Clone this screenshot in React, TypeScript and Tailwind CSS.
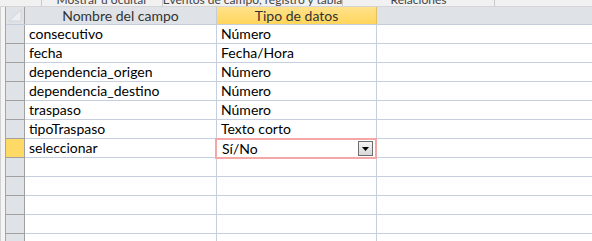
import React from "react";

const rows: [string, string][] = [
  ["consecutivo", "Número"],
  ["fecha", "Fecha/Hora"],
  ["dependencia_origen", "Número"],
  ["dependencia_destino", "Número"],
  ["traspaso", "Número"],
  ["tipoTraspaso", "Texto corto"],
  ["seleccionar", "Sí/No"],
  ["", ""],
  ["", ""],
  ["", ""],
  ["", ""],
  ["", ""],
];

const SELECTED = 6;

export default function App() {
  return (
    <div className="w-[592px] h-[241px] overflow-hidden bg-white flex flex-col font-['Lato','Open_Sans',sans-serif] text-[14px] text-black">
      {/* ribbon group labels, clipped */}
      <div className="h-[7px] shrink-0 overflow-hidden bg-[#f1f1f1] border-b border-[#d5d5d5] flex text-[12px] text-[#444] leading-none whitespace-nowrap">
        <div className="w-[42px] shrink-0 border-r border-[#c8c8c8]" />
        <div className="w-[121px] shrink-0 border-r border-[#c8c8c8] flex justify-center">
          <span className="-mt-[6px]">Mostrar u ocultar</span>
        </div>
        <div className="w-[180px] shrink-0 border-r border-[#c8c8c8] flex justify-center">
          <span className="-mt-[6px]">Eventos de campo, registro y tabla</span>
        </div>
        <div className="w-[152px] shrink-0 border-r border-[#c8c8c8] flex justify-center">
          <span className="-mt-[6px]">Relaciones</span>
        </div>
      </div>

      <div className="flex flex-1 min-h-0">
        {/* left frame */}
        <div className="w-[6px] shrink-0 border-l border-r border-l-[#d0d0d0] border-r-[#a5a5a5] bg-[#f4f4f4]" />

        <div className="flex-1 flex flex-col">
          {/* header */}
          <div className="flex h-[18px] shrink-0 bg-[#dfe3e8] border-b border-[#c5cddb] text-[#333]">
            <div className="w-[19px] shrink-0 border-r border-[#a0a0a0] relative">
              <svg width="13" height="12" viewBox="0 0 13 12" className="absolute left-[3px] top-[3px]">
                <path d="M12 0 L12 11 L0 11 Z" fill="#eceef1" stroke="#c6cad0" strokeWidth="0.6" />
              </svg>
            </div>
            <div className="w-[192px] shrink-0 border-r border-[#c5cddb] flex items-center justify-center leading-none">
              Nombre del campo
            </div>
            <div className="w-[160px] shrink-0 border-r border-[#e0c060] bg-gradient-to-b from-[#ffe28a] to-[#ffd55a] flex items-center justify-center leading-none">
              Tipo de datos
            </div>
            <div className="flex-1" />
          </div>

          {rows.map(([name, type], i) => {
            const sel = i === SELECTED;
            return (
              <div key={i} className="flex h-[19px] shrink-0">
                <div
                  className={
                    "w-[19px] shrink-0 border-r border-b border-[#a0a0a0] " +
                    (sel ? "bg-[#ffd966]" : "bg-[#dfe3e8]")
                  }
                />
                <div className="w-[192px] shrink-0 border-r border-b border-[#c5cfdf] pl-[4px] flex items-center leading-none">
                  {name}
                </div>
                {sel ? (
                  <div className="w-[162px] shrink-0 border-2 border-[#f4a7a7] -ml-[2px] -mr-[2px] pl-[5px] pr-[2px] flex items-center justify-between leading-none relative z-10 bg-white h-[21px] -mt-[1px]">
                    <span>{type}</span>
                    <div className="w-[15px] h-[15px] border border-[#6d6d6d] bg-gradient-to-b from-[#f4f4f4] to-[#d8d8d8] flex items-center justify-center">
                      <svg width="7" height="4" viewBox="0 0 7 4">
                        <path d="M0 0 H7 L3.5 4 Z" fill="#000" />
                      </svg>
                    </div>
                  </div>
                ) : (
                  <div className="w-[160px] shrink-0 border-r border-b border-[#c5cfdf] pl-[4px] flex items-center leading-none">
                    {type}
                  </div>
                )}
                <div className="flex-1 border-b border-[#c5cfdf]" />
              </div>
            );
          })}
        </div>
      </div>
    </div>
  );
}
